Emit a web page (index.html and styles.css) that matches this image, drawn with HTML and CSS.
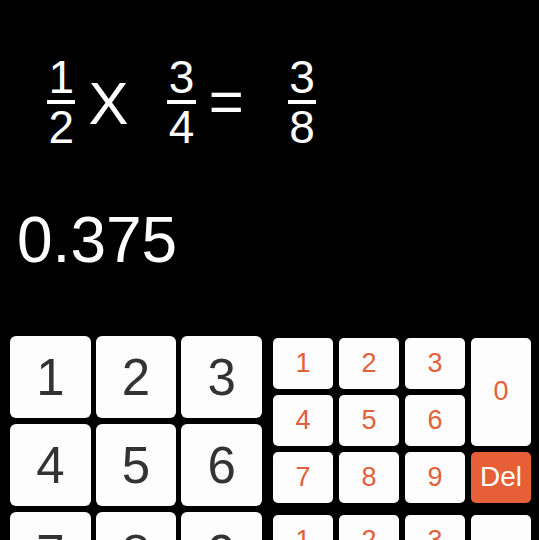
FILE: index.html
```html
<!DOCTYPE html>
<html lang="en">
<head>
    <meta charset="UTF-8">
    <meta name="viewport" content="width=device-width, initial-scale=1.0">
    <title>Bruchrechner</title>
    <link rel="stylesheet" href="styles.css">
</head>
<body>
    <main class="screen">
        <section class="display">
            <div class="expr">
                <span class="frac"><span class="num">1</span><span class="den">2</span></span>
                <span class="op times">X</span>
                <span class="frac frac-b"><span class="num">3</span><span class="den">4</span></span>
                <span class="op equals">=</span>
                <span class="frac frac-c"><span class="num">3</span><span class="den">8</span></span>
            </div>
            <div class="result">0.375</div>
        </section>

        <section class="pads">
            <div class="pad-main">
                <button class="key">1</button>
                <button class="key">2</button>
                <button class="key">3</button>
                <button class="key">4</button>
                <button class="key">5</button>
                <button class="key">6</button>
                <button class="key">7</button>
                <button class="key">8</button>
                <button class="key">9</button>
            </div>
            <div class="pad-side">
                <!-- Zähler -->
                <div class="block">
                    <button class="skey">1</button>
                    <button class="skey">2</button>
                    <button class="skey">3</button>
                    <button class="skey zero">0</button>
                    <button class="skey">4</button>
                    <button class="skey">5</button>
                    <button class="skey">6</button>
                    <button class="skey">7</button>
                    <button class="skey">8</button>
                    <button class="skey">9</button>
                    <button class="skey del">Del</button>
                </div>
                <!-- Nenner -->
                <div class="block">
                    <button class="skey">1</button>
                    <button class="skey">2</button>
                    <button class="skey">3</button>
                    <button class="skey zero">0</button>
                    <button class="skey">4</button>
                    <button class="skey">5</button>
                    <button class="skey">6</button>
                    <button class="skey">7</button>
                    <button class="skey">8</button>
                    <button class="skey">9</button>
                    <button class="skey del">Del</button>
                </div>
            </div>
        </section>
    </main>
</body>
</html>
```

FILE: styles.css
```css
html{
    overflow: hidden;
}
body{
    margin: 0;
    height: 540px;
    overflow: hidden;
    background: #000;
    color: #fff;
    font-family: "Liberation Sans", Arial, sans-serif;
}
.expr{
    display: flex;
    align-items: center;
    padding: 54px 0 0 47px;
}
.frac{
    display: flex;
    flex-direction: column;
    align-items: center;
    font-size: 46px;
    line-height: 46px;
}
.frac .num{
    border-bottom: 4px solid #fff;
    padding: 0 1.4px;
}
.op{
    font-size: 60px;
    line-height: 60px;
}
.times{
    margin-left: 13px;
    padding-top: 4px;
}
.frac-b{
    margin-left: 39px;
}
.equals{
    margin-left: 13px;
}
.frac-c{
    margin-left: 44px;
}
.result{
    margin-top: 58px;
    padding-left: 17px;
    font-size: 64px;
    line-height: 64px;
}
.pads{
    display: flex;
    margin-top: 64px;
}
.pad-main{
    display: grid;
    grid-template-columns: repeat(3, 1fr);
    grid-auto-rows: 82px;
    gap: 6px 5px;
    width: 252px;
    margin-left: 10px;
}
.key{
    border: none;
    border-radius: 6px;
    background: #fdfdfd;
    color: #333;
    font-family: inherit;
    font-size: 51px;
    padding: 0;
}
.pad-side{
    width: 258px;
    margin-left: 11px;
    padding-top: 1.5px;
}
.block{
    display: grid;
    grid-template-columns: repeat(4, 60px);
    grid-auto-rows: 51px;
    gap: 6px;
    margin-bottom: 12px;
}
.skey{
    border: none;
    border-radius: 5px;
    background: #fdfdfd;
    color: #e2603c;
    font-family: inherit;
    font-size: 27px;
    padding: 0;
}
.zero{
    grid-column: 4;
    grid-row: 1 / span 2;
}
.del{
    grid-column: 4;
    grid-row: 3;
    background: #e65f37;
    color: #fff;
    font-size: 28px;
}
```
